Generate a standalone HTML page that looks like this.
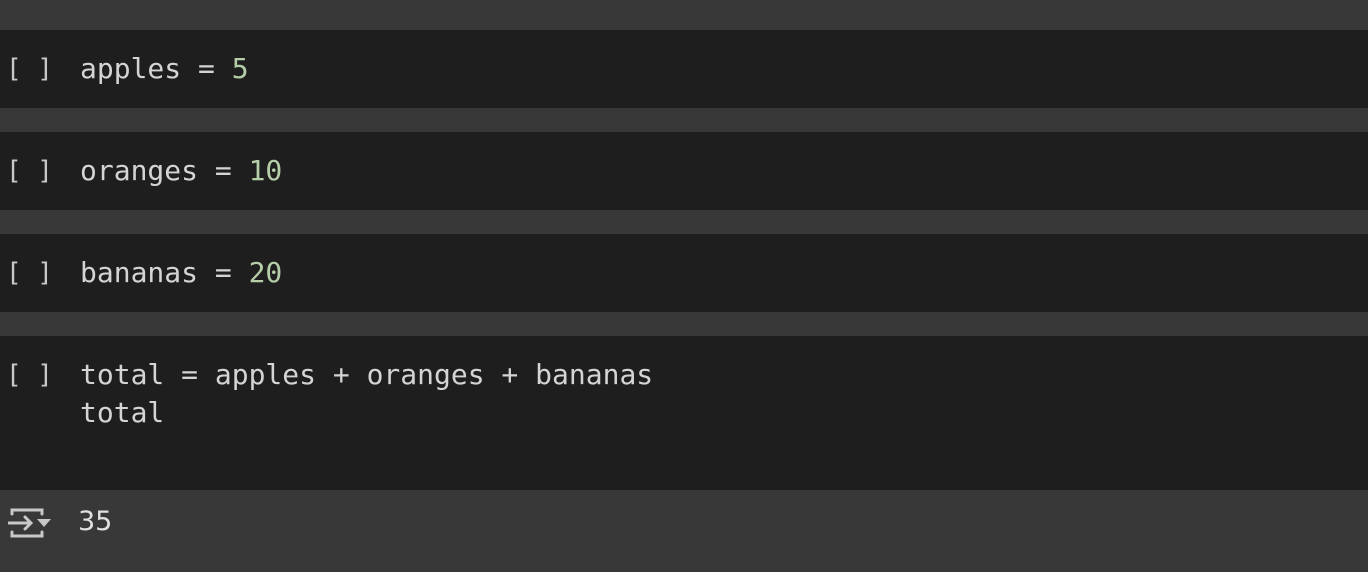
<!DOCTYPE html>
<html><head><style>
body{margin:0;width:1368px;height:572px;background:#383838;overflow:hidden;position:relative;font-family:"DejaVu Sans Mono","Liberation Mono",monospace;color:#d4d4d4}
.cell{position:absolute;left:0;width:1368px;background:#1e1e1e}
.b{position:absolute;left:6px;font-size:26px;color:#c8c8c8;line-height:38px}
.code{position:absolute;left:80px;font-size:28px;line-height:38px;white-space:pre}
.n{color:#b5cea8}
</style></head><body>
<div class="cell" style="top:30px;height:78px"><div class="b" style="top:20px">[ ]</div><div class="code" style="top:20px">apples = <span class="n">5</span></div></div>
<div class="cell" style="top:132px;height:78px"><div class="b" style="top:20px">[ ]</div><div class="code" style="top:20px">oranges = <span class="n">10</span></div></div>
<div class="cell" style="top:234px;height:78px"><div class="b" style="top:20px">[ ]</div><div class="code" style="top:20px">bananas = <span class="n">20</span></div></div>
<div class="cell" style="top:336px;height:154px"><div class="b" style="top:20px">[ ]</div><div class="code" style="top:20px">total = apples + oranges + bananas
total</div></div>
<svg style="position:absolute;left:8px;top:506px" width="46" height="34" viewBox="0 0 46 34">
<g fill="none" stroke="#c8c8c8" stroke-width="3" stroke-linecap="round">
<path d="M4 8V4h30v4"/><path d="M4 26v4h30v-4"/><path d="M1 17h22M17 11l6 6-6 6"/></g>
<path d="M29 13h14l-7 8z" fill="#c8c8c8"/></svg>
<div style="position:absolute;left:78px;top:503px;font-family:'DejaVu Sans','Liberation Sans',sans-serif;font-size:27px;line-height:38px;color:#e0e0e0">35</div>
</body></html>
